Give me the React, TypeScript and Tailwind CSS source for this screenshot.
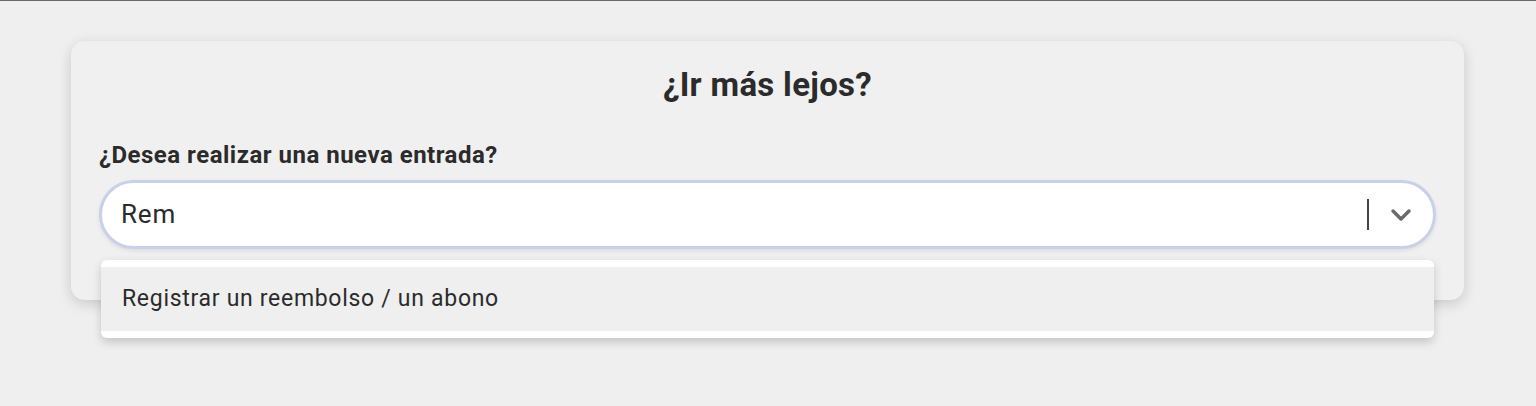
import React from "react";

export default function App() {
  return (
    <div
      className="w-[1536px] h-[406px] bg-[#efefef] border-t border-[#6b6b6b] overflow-hidden"
      style={{ fontFamily: "Roboto, 'Noto Sans', sans-serif" }}
    >
      <div className="ml-[71px] mt-[40px] w-[1393px] h-[259px] rounded-[14px] bg-[#f0f0f0] shadow-[0_4px_14px_rgba(0,0,0,0.16)] px-[28px] pt-[24px]">
        <h1 className="text-center text-[33px] leading-[40px] font-bold text-[#2b2b2b] tracking-[0.3px]">¿Ir más lejos?</h1>
        <div className="mt-[38px] text-[24px] leading-[24px] font-bold text-[#2b2b2b] tracking-[0.5px]">¿Desea realizar una nueva entrada?</div>
        <div className="relative mt-[13px]">
          <div className="h-[69px] rounded-full border-[3px] border-[#c9d0ea] bg-white flex items-center pl-[19px] pr-[18px] shadow-[0_2px_4px_rgba(0,0,0,0.08)]">
            <span className="flex-1 text-[26px] text-[#2b2b2b] tracking-[0.8px]">Rem</span>
            <span className="w-[2px] h-[31px] bg-[#444]" />
            <svg className="ml-[21px] mr-[3px]" width="22" height="14" viewBox="0 0 22 14">
              <path d="M3 3 L11 11 L19 3" fill="none" stroke="#6a6a6a" strokeWidth="3.5" strokeLinecap="round" strokeLinejoin="round" />
            </svg>
          </div>
          <div className="absolute left-[2px] right-[2px] top-[80px] rounded-[6px] bg-white py-[7px] shadow-[0_4px_10px_rgba(0,0,0,0.18)]">
            <div className="h-[64px] bg-[#efefef] flex items-center pl-[21px] text-[23px] text-[#2b2b2b] tracking-[0.7px]">
              Registrar un reembolso / un abono
            </div>
          </div>
        </div>
      </div>
    </div>
  );
}
